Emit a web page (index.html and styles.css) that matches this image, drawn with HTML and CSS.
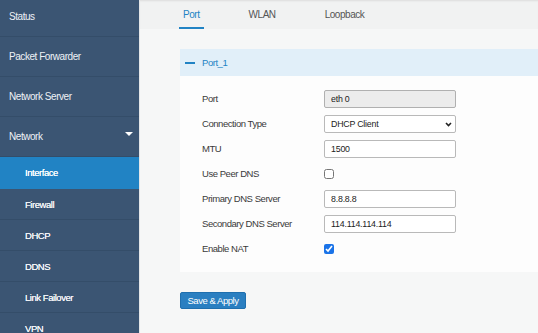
FILE: index.html
```html
<!DOCTYPE html>
<html lang="en">
<head>
    <meta charset="UTF-8">
    <meta name="viewport" content="width=device-width, initial-scale=1.0">
    <title>Network - Interface</title>
    <link rel="stylesheet" href="styles.css">
</head>
<body>
    <aside class="sidebar">
        <div class="menu-list">
            <div class="menu-item">Status</div>
            <div class="menu-item">Packet Forwarder</div>
            <div class="menu-item">Network Server</div>
            <div class="menu-item open">Network <span class="caret"></span></div>
            <div class="sub-item active">Interface</div>
            <div class="sub-item">Firewall</div>
            <div class="sub-item">DHCP</div>
            <div class="sub-item">DDNS</div>
            <div class="sub-item">Link Failover</div>
            <div class="sub-item">VPN</div>
        </div>
    </aside>
    <main class="content">
        <nav class="tabs">
            <div class="tab active">Port</div>
            <div class="tab">WLAN</div>
            <div class="tab">Loopback</div>
        </nav>
        <section class="panel">
            <div class="panel-head"><span class="dash"></span>Port_1</div>
            <div class="panel-body">
                <div class="row">
                    <label>Port</label>
                    <input class="field readonly" type="text" value="eth 0" readonly>
                </div>
                <div class="row">
                    <label>Connection Type</label>
                    <div class="select-wrap">
                        <select class="field">
                            <option>DHCP Client</option>
                            <option>Static IP</option>
                            <option>PPPoE</option>
                        </select>
                        <svg class="chevron" width="7" height="5" viewBox="0 0 7 5"><path d="M1 1 L3.5 3.5 L6 1" fill="none" stroke="#222" stroke-width="1.6"/></svg>
                    </div>
                </div>
                <div class="row">
                    <label>MTU</label>
                    <input class="field" type="text" value="1500">
                </div>
                <div class="row">
                    <label>Use Peer DNS</label>
                    <input class="check" type="checkbox">
                </div>
                <div class="row">
                    <label>Primary DNS Server</label>
                    <input class="field" type="text" value="8.8.8.8">
                </div>
                <div class="row">
                    <label>Secondary DNS Server</label>
                    <input class="field" type="text" value="114.114.114.114">
                </div>
                <div class="row">
                    <label>Enable NAT</label>
                    <input class="check" type="checkbox" checked>
                </div>
            </div>
        </section>
        <button class="save">Save &amp; Apply</button>
    </main>
</body>
</html>
```

FILE: styles.css
```css
* {
    margin: 0;
    padding: 0;
    box-sizing: border-box;
}
body {
    font-family: "Liberation Sans", Arial, sans-serif;
    letter-spacing: -0.45px;
    width: 538px;
    height: 333px;
    overflow: hidden;
    display: flex;
    background: #f6f7f7;
}
.sidebar {
    width: 139px;
    flex-shrink: 0;
    background: #3b5573;
    color: #eef2f6;
    overflow: hidden;
}
.menu-list {
    margin-top: -3px;
}
.menu-item {
    height: 40px;
    padding-left: 9px;
    display: flex;
    align-items: center;
    justify-content: space-between;
    font-size: 10px;
    border-bottom: 1px solid #344d69;
}
.caret {
    width: 0;
    height: 0;
    margin-right: 6px;
    margin-top: -6px;
    border-left: 4px solid transparent;
    border-right: 4px solid transparent;
    border-top: 4px solid #fff;
}
.sub-item {
    height: 31px;
    padding-left: 25px;
    display: flex;
    align-items: center;
    font-size: 9.5px;
    color: #f2f5f8;
    text-shadow: 0 0 0.4px #fff;
    border-bottom: 1px solid #344d69;
}
.sub-item.active {
    height: 32px;
    background: #2183c4;
    border-bottom-color: #2183c4;
    color: #fff;
}
.content {
    flex: 1;
    border-left: 1px solid #e4e6e8;
}
.tabs {
    height: 29px;
    background: #f1f2f2;
    display: flex;
    gap: 41px;
    padding-left: 39px;
    box-shadow: inset 0 2px 2px -1px #dcdcdc;
}
.tab {
    padding: 0 4px;
    font-size: 10px;
    color: #555;
    display: flex;
    align-items: center;
    border-bottom: 2px solid transparent;
    padding-top: 2px;
}
.tab.active {
    color: #2183c4;
    border-bottom-color: #2183c4;
}
.panel {
    margin: 20px 0 0 40px;
    background: #fdfdfd;
}
.panel-head {
    height: 27px;
    background: #e1eff9;
    color: #2183c4;
    font-size: 9.5px;
    display: flex;
    align-items: center;
    padding-left: 5px;
}
.dash {
    width: 10px;
    height: 2px;
    background: #2183c4;
    margin-right: 7px;
}
.panel-body {
    padding: 10px 0 11px 22px;
}
.row {
    height: 25px;
    display: flex;
    align-items: center;
}
.row label {
    width: 122px;
    font-size: 9.5px;
    color: #3a3a3a;
}
.field {
    width: 132px;
    height: 18px;
    border: 1px solid #b9b9b9;
    border-radius: 2px;
    background: #fff;
    font-family: inherit;
    letter-spacing: -0.2px;
    font-size: 8.8px;
    color: #222;
    padding-left: 6px;
    outline: none;
}
.field.readonly {
    background: #ececec;
    border-color: #b0b0b0;
}
.select-wrap {
    position: relative;
}
.select-wrap select {
    appearance: none;
    display: block;
}
.chevron {
    position: absolute;
    right: 4px;
    top: 7px;
}
.check {
    width: 10px;
    height: 10px;
    margin: 0;
    accent-color: #1a73e8;
}
.save {
    margin: 20px 0 0 40px;
    width: 66px;
    height: 17px;
    background: #2a7fc1;
    border: 1px solid #1f6fae;
    border-radius: 2px;
    color: #fff;
    font-family: inherit;
    letter-spacing: -0.45px;
    font-size: 9.5px;
    cursor: pointer;
}
```
